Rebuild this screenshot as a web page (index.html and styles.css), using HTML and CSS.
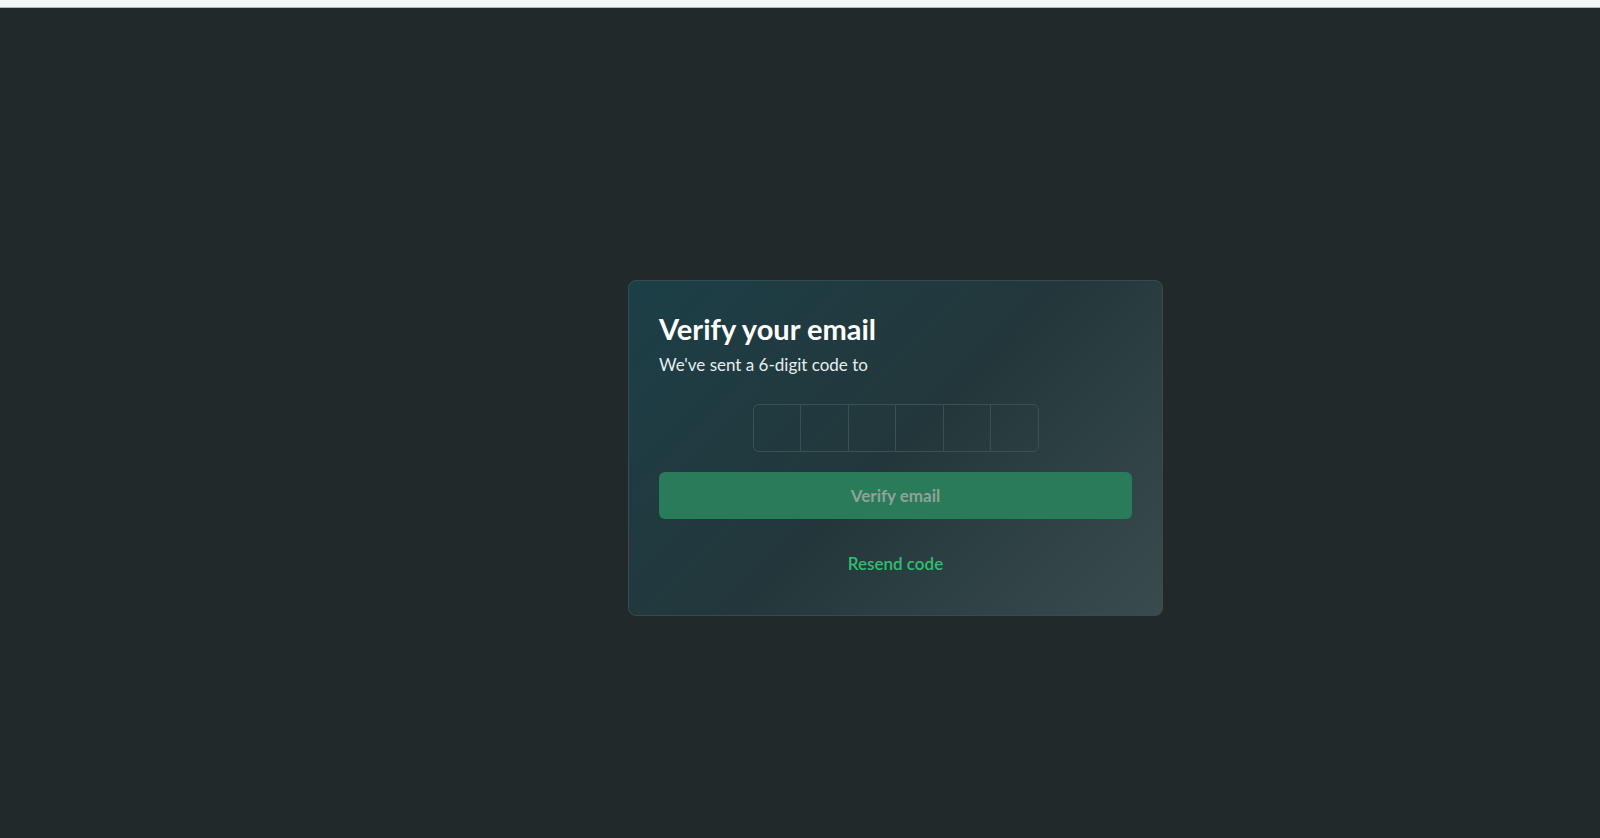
FILE: index.html
```html
<!DOCTYPE html>
<html lang="en">
<head>
<meta charset="utf-8">
<title>Verify your email</title>
<link rel="stylesheet" href="styles.css">
</head>
<body>
<div class="topbar"></div>
<main class="main">
  <section class="card">
    <h1 class="title">Verify your email</h1>
    <p class="subtitle">We've sent a 6-digit code to</p>
    <div class="otp">
      <input class="otp-cell" type="text" maxlength="1" aria-label="Digit 1">
      <input class="otp-cell" type="text" maxlength="1" aria-label="Digit 2">
      <input class="otp-cell" type="text" maxlength="1" aria-label="Digit 3">
      <input class="otp-cell" type="text" maxlength="1" aria-label="Digit 4">
      <input class="otp-cell" type="text" maxlength="1" aria-label="Digit 5">
      <input class="otp-cell" type="text" maxlength="1" aria-label="Digit 6">
    </div>
    <button class="verify-btn" type="button" disabled>Verify email</button>
    <button class="resend" type="button">Resend code</button>
  </section>
</main>
</body>
</html>
```
FILE: styles.css
```css
* { box-sizing: border-box; }
html, body { margin: 0; padding: 0; }
body {
  background: #22292b;
  font-family: Lato, "Open Sans", sans-serif;
  height: 838px;
  overflow: hidden;
}
.topbar {
  height: 8px;
  background: #f3f8f7;
  border-bottom: 1px solid #aeb6b6;
}
.main {
  display: flex;
  justify-content: center;
  padding-left: 191px;
  padding-top: 272px;
}
.card {
  width: 535px;
  height: 336px;
  padding: 30px;
  border-radius: 8px;
  border: 1px solid #364b4f;
  background: linear-gradient(135deg, #1c3f47 0%, #23373b 50%, #3a4b4e 100%);
  display: flex;
  flex-direction: column;
}
.title {
  margin: 0;
  font-size: 29px;
  line-height: 36px;
  font-weight: 700;
  color: #ffffff;
}
.subtitle {
  margin: 6px 0 0;
  font-size: 17px;
  line-height: 24px;
  color: #e6eeee;
}
.otp {
  align-self: center;
  display: flex;
  width: 286px;
  margin-top: 27px;
  border: 1px solid #3a5154;
  border-radius: 6px;
  overflow: hidden;
}
.otp-cell {
  flex: 1 1 0;
  min-width: 0;
  height: 46px;
  border: 0;
  border-left: 1px solid #3a5154;
  background: transparent;
  color: #fff;
  font-size: 20px;
  text-align: center;
  outline: none;
}
.otp-cell:first-child { border-left: 0; }
.verify-btn {
  margin-top: 20px;
  height: 47px;
  width: 100%;
  border: 0;
  border-radius: 6px;
  background: #2a7b59;
  color: #8fa39b;
  font-family: inherit;
  font-size: 17px;
  font-weight: 700;
}
.resend {
  align-self: center;
  margin-top: 28px;
  background: none;
  border: 0;
  padding: 6px 8px;
  color: #2fbf71;
  font-family: inherit;
  font-size: 17px;
  font-weight: 600;
}
```
